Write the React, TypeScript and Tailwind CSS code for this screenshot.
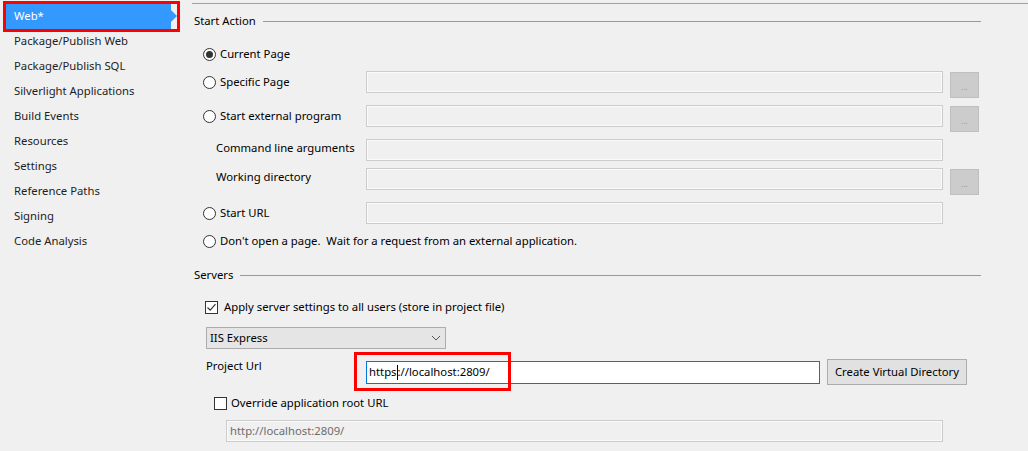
import { useState } from 'react';

const navItems = [
  'Package/Publish Web',
  'Package/Publish SQL',
  'Silverlight Applications',
  'Build Events',
  'Resources',
  'Settings',
  'Reference Paths',
  'Signing',
  'Code Analysis',
];

function Radio({ checked }: { checked?: boolean }) {
  return (
    <span className="w-[13px] h-[13px] rounded-full border border-[#333333] bg-white flex items-center justify-center shrink-0">
      {checked && <span className="w-[7px] h-[7px] rounded-full bg-[#333333]" />}
    </span>
  );
}

function CheckBox({ checked }: { checked?: boolean }) {
  return (
    <span className="w-[13px] h-[13px] border border-[#333333] bg-white flex items-center justify-center shrink-0">
      {checked && (
        <svg width="11" height="11" viewBox="0 0 11 11" fill="none">
          <path d="M1.5 5.5 L4.2 8.2 L9.5 2.2" stroke="#333333" strokeWidth="1.2" />
        </svg>
      )}
    </span>
  );
}

function Box({ className = '' }: { className?: string }) {
  return <div className={`h-[22px] border border-[#cccccc] bg-[#f0f0f0] shadow-[inset_0_0_0_1px_#fafafa] ${className}`} />;
}

function Browse() {
  return (
    <div className="self-start mt-[1px] ml-[7px] w-[29px] h-[26px] bg-[#cccccc] border border-[#bfbfbf] flex items-end justify-center pb-[6px] text-[8px] leading-none text-[#999999]">
      ...
    </div>
  );
}

function Header({ label }: { label: string }) {
  return (
    <div className="h-[20px] w-[787px] ml-[2px] flex items-center">
      <span>{label}</span>
      <div className="flex-1 ml-[7px] border-t border-[#999999]" />
    </div>
  );
}

export default function App() {
  const [selected] = useState('Web*');

  return (
    <div className="w-[1028px] h-[451px] bg-[#f0f0f0] flex text-[11.3px] text-black overflow-hidden" style={{ fontFamily: '"Noto Sans", sans-serif' }}>
      {/* left nav */}
      <div className="w-[192px] shrink-0 pt-[4px] text-[#1e1e1e]">
        <div className="relative ml-[6px] w-[165px] h-[25px] bg-[#3399ff] text-white flex items-center pl-[8px]">
          {selected}
          <span className="absolute right-[-6px] top-[6px] w-0 h-0 border-y-[6px] border-y-transparent border-l-[6px] border-l-[#3399ff]" />
          <span className="absolute left-[-3px] top-[-3px] right-[-9px] bottom-[-3px] border-[3px] border-[#ff0000]" />
        </div>
        {navItems.map(item => (
          <div key={item} className="h-[25px] flex items-center pl-[14px]">
            {item}
          </div>
        ))}
      </div>

      {/* right pane */}
      <div className="flex-1 mt-[3px] border-t border-[#a0a0a0] flex flex-col">
        <div className="mt-[7px]">
          <Header label="Start Action" />
        </div>

        <div className="mt-[13px] h-[20px] ml-[11px] flex items-center gap-[4px]">
          <Radio checked />
          <span>Current Page</span>
        </div>

        <div className="mt-[7px] h-[22px] ml-[11px] flex items-center">
          <div className="w-[163px] flex items-center gap-[4px]">
            <Radio />
            <span>Specific Page</span>
          </div>
          <Box className="w-[577px]" />
          <Browse />
        </div>

        <div className="mt-[12px] h-[22px] ml-[11px] flex items-center">
          <div className="w-[163px] flex items-center gap-[4px]">
            <Radio />
            <span>Start external program</span>
          </div>
          <Box className="w-[577px]" />
          <Browse />
        </div>

        <div className="mt-[12px] h-[22px] ml-[11px] flex items-center">
          <div className="w-[163px] pl-[13px] mt-[-3px]">Command line arguments</div>
          <Box className="w-[577px]" />
        </div>

        <div className="mt-[7px] h-[22px] ml-[11px] flex items-center">
          <div className="w-[163px] pl-[13px] mt-[-3px]">Working directory</div>
          <Box className="w-[577px]" />
          <Browse />
        </div>

        <div className="mt-[12px] h-[22px] ml-[11px] flex items-center">
          <div className="w-[163px] flex items-center gap-[4px]">
            <Radio />
            <span>Start URL</span>
          </div>
          <Box className="w-[577px]" />
        </div>

        <div className="mt-[7px] h-[20px] ml-[11px] flex items-center gap-[4px]">
          <Radio />
          <span>Don't open a page.&nbsp; Wait for a request from an external application.</span>
        </div>

        <div className="mt-[14px]">
          <Header label="Servers" />
        </div>

        <div className="mt-[12px] h-[20px] ml-[13px] flex items-center gap-[6px]">
          <CheckBox checked />
          <span>Apply server settings to all users (store in project file)</span>
        </div>

        <div className="mt-[10px] ml-[14px] w-[240px] h-[22px] bg-[#e5e5e5] border border-[#acacac] flex items-center justify-between pl-[3px] pr-[4px]">
          <span>IIS Express</span>
          <svg width="10" height="6" viewBox="0 0 10 6" fill="none">
            <path d="M1 1 L5 5 L9 1" stroke="#555555" strokeWidth="1" />
          </svg>
        </div>

        <div className="relative mt-[10px] h-[26px] ml-[14px] flex items-start">
          <div className="w-[160px] mt-[-1px]">Project Url</div>
          <div className="mt-[2px] w-[454px] h-[23px] bg-white border border-[#0078d7] flex items-center pl-[2px]">
            <span>https</span>
            <span className="inline-block w-px h-[15px] bg-black" />
            <span>://localhost:2809/</span>
          </div>
          <button className="ml-[7px] w-[140px] h-[26px] bg-[#e1e1e1] border border-[#adadad]">
            Create Virtual Directory
          </button>
          <span className="absolute left-[148px] top-[-7px] w-[157px] h-[39px] border-[3px] border-[#ff0000]" />
        </div>

        <div className="mt-[8px] h-[20px] ml-[22px] flex items-center gap-[4px]">
          <CheckBox />
          <span>Override application root URL</span>
        </div>

        <div className="mt-[7px] ml-[34px] w-[717px] h-[22px] border border-[#cccccc] bg-[#f0f0f0] shadow-[inset_0_0_0_1px_#fafafa] flex items-center pl-[3px] text-[#6d6d6d]">
          http://localhost:2809/
        </div>
      </div>
    </div>
  );
}
